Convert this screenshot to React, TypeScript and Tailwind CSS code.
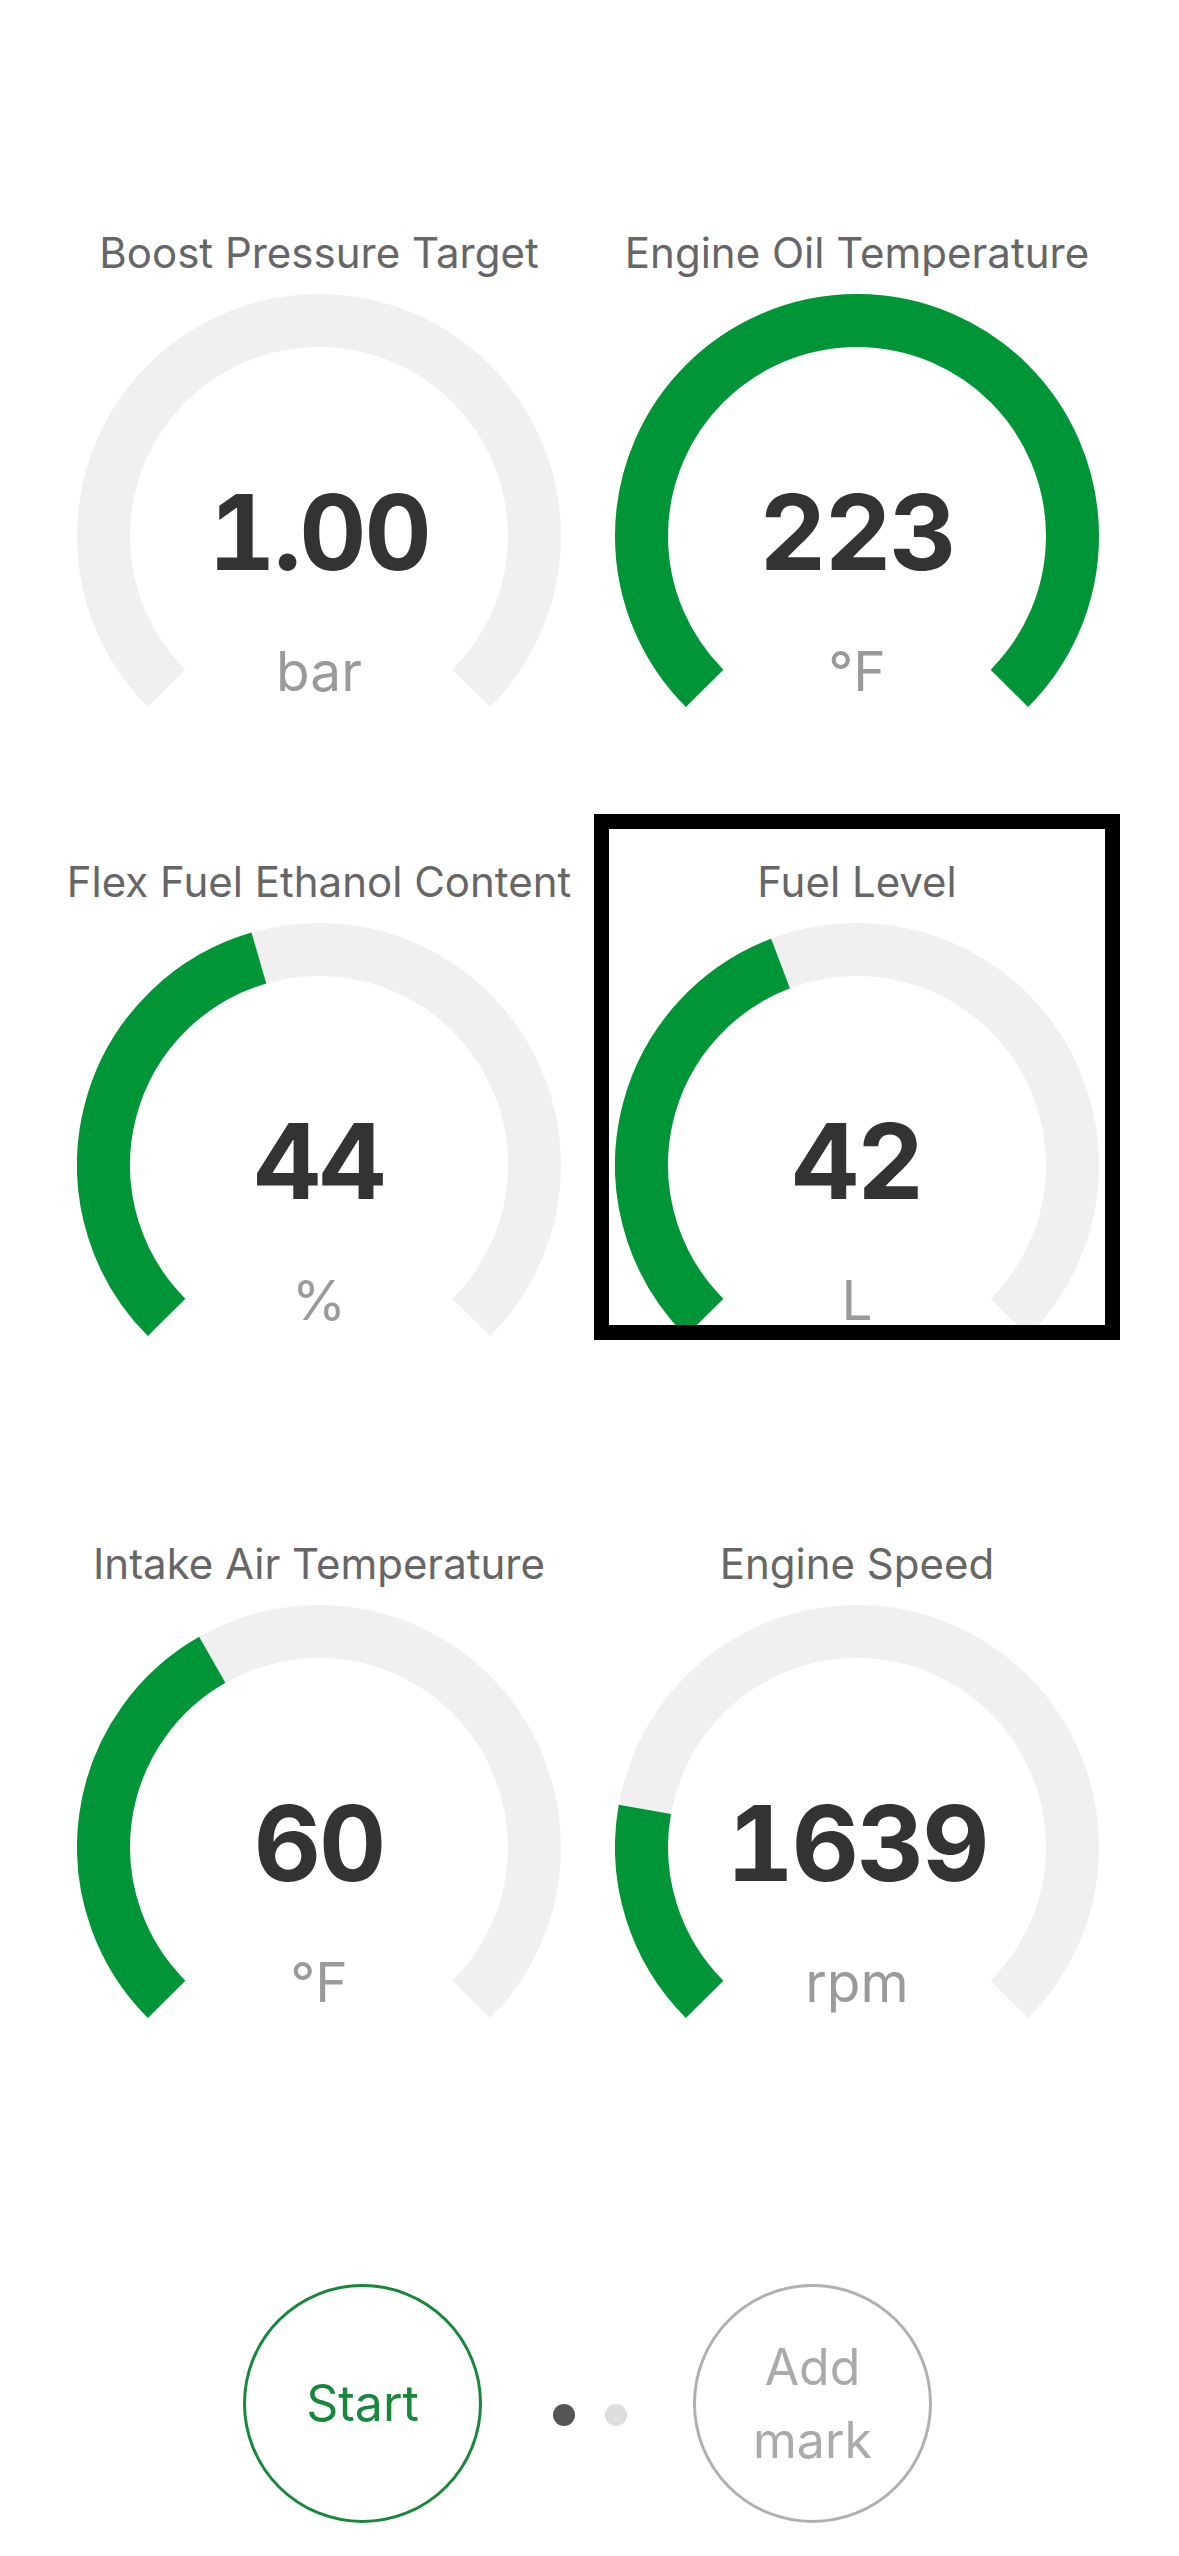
type Gauge = {
  title: string;
  value: string;
  unit: string;
  fill: number;
  selected?: boolean;
};

const rows: { gap: string; items: Gauge[] }[] = [
  {
    gap: "mt-[185px]",
    items: [
      { title: "Boost Pressure Target", value: "1.00", unit: "bar", fill: 0 },
      { title: "Engine Oil Temperature", value: "223", unit: "°F", fill: 1 },
    ],
  },
  {
    gap: "mt-[103px]",
    items: [
      { title: "Flex Fuel Ethanol Content", value: "44", unit: "%", fill: 0.44 },
      { title: "Fuel Level", value: "42", unit: "L", fill: 0.423, selected: true },
    ],
  },
  {
    gap: "mt-[156px]",
    items: [
      { title: "Intake Air Temperature", value: "60", unit: "°F", fill: 0.39 },
      { title: "Engine Speed", value: "1639", unit: "rpm", fill: 0.204 },
    ],
  },
];

const CX = 242;
const CY = 242;
const R = 215.5;

function point(deg: number) {
  const a = (deg * Math.PI) / 180;
  return [CX + R * Math.sin(a), CY - R * Math.cos(a)];
}

function arc(from: number, to: number) {
  const [x1, y1] = point(from);
  const [x2, y2] = point(to);
  const large = to - from > 180 ? 1 : 0;
  return `M ${x1} ${y1} A ${R} ${R} 0 ${large} 1 ${x2} ${y2}`;
}

function GaugeCell({ g }: { g: Gauge }) {
  const end = -135 + 270 * g.fill;
  return (
    <div className="relative w-[526px] h-[526px] flex flex-col items-center pt-[42px]">
      <div className="h-[52px] leading-[52px] text-[42px] text-[#666666] whitespace-nowrap">
        {g.title}
      </div>
      <div className="relative mt-[15px] w-[484px] h-[414px]">
        <svg width="484" height="414" viewBox="0 0 484 414">
          <path d={arc(-135, 135)} fill="none" stroke="#f0f0f0" strokeWidth="53" />
          {g.fill > 0 && (
            <path d={arc(-135, end)} fill="none" stroke="#009637" strokeWidth="53" />
          )}
        </svg>
        <div className="absolute left-0 right-0 top-[178px] h-[120px] leading-[120px] text-center text-[104px] font-bold text-[#333333] tracking-[-2px] tabular-nums">
          {g.value}
        </div>
        <div className="absolute left-0 right-0 top-[345px] h-[64px] leading-[64px] text-center text-[55px] text-[#9a9a9a]">
          {g.unit}
        </div>
      </div>
      {g.selected && (
        <div className="absolute inset-0 border-[15px] border-black pointer-events-none" />
      )}
    </div>
  );
}

export default function App() {
  return (
    <div className="w-[1179px] h-[2556px] bg-white flex flex-col font-['Inter','Noto_Sans',sans-serif]">
      {rows.map((row, i) => (
        <div key={i} className={`${row.gap} pl-[56px] flex gap-[12px]`}>
          {row.items.map((g) => (
            <GaugeCell key={g.title} g={g} />
          ))}
        </div>
      ))}

      <div className="mt-[262px] flex justify-center items-center pr-[4px]">
        <button className="w-[239px] h-[239px] rounded-full border-[3px] border-[#17883a] text-[#17883a] text-[50px] flex items-center justify-center">
          Start
        </button>
        <div className="ml-[71px] mr-[66px] pt-[22px] flex gap-[30px]">
          <span className="w-[22px] h-[22px] rounded-full bg-[#555555]" />
          <span className="w-[22px] h-[22px] rounded-full bg-[#dddddd]" />
        </div>
        <button className="w-[239px] h-[239px] rounded-full border-[3px] border-[#b0b0b0] text-[#aaaaaa] text-[50px] leading-[73px] flex flex-col items-center justify-center">
          <span>Add</span>
          <span>mark</span>
        </button>
      </div>
    </div>
  );
}
